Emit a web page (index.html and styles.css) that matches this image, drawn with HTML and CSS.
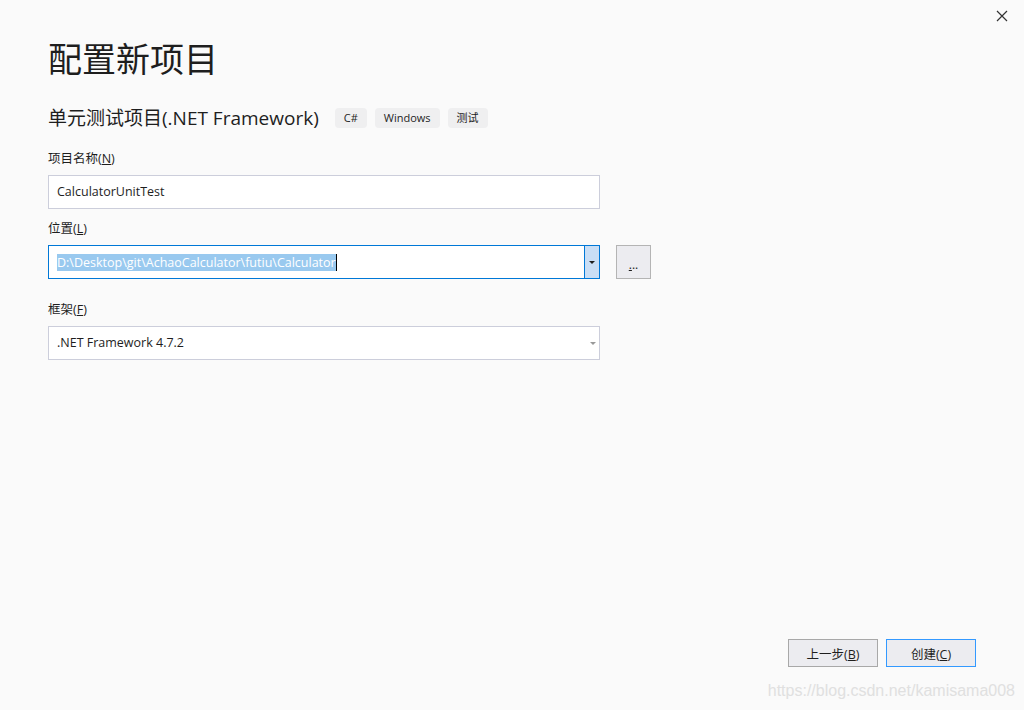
FILE: index.html
```html
<!DOCTYPE html>
<html lang="zh-CN">
<head>
  <meta charset="UTF-8">
  <meta name="viewport" content="width=device-width, initial-scale=1.0">
  <title>配置新项目</title>
  <link rel="stylesheet" href="styles.css">
</head>
<body>
  <div class="dialog">
    <div class="title-bar">
      <button class="close-button" title="关闭">
        <svg width="12" height="12" viewBox="0 0 12 12">
          <path d="M1 1 L11 11 M11 1 L1 11" stroke="#333" stroke-width="1.2" fill="none"/>
        </svg>
      </button>
    </div>

    <div class="content">
      <h1 class="page-title">配置新项目</h1>

      <div class="template-row">
        <h2 class="template-name">单元测试项目(.NET Framework)</h2>
        <span class="tag">C#</span>
        <span class="tag">Windows</span>
        <span class="tag">测试</span>
      </div>

      <div class="field name">
        <label class="field-label">项目名称(<u>N</u>)</label>
        <div class="text-box">CalculatorUnitTest</div>
      </div>

      <div class="field location">
        <label class="field-label">位置(<u>L</u>)</label>
        <div class="field-row">
          <div class="text-box combo focused">
            <span class="combo-text"><span class="selected">D:\Desktop\git\AchaoCalculator\futiu\Calculator</span><span class="caret"></span></span>
            <span class="combo-drop"><span class="arrow dark"></span></span>
          </div>
          <button class="browse-button"><u>.</u>..</button>
        </div>
      </div>

      <div class="field framework">
        <label class="field-label">框架(<u>F</u>)</label>
        <div class="text-box combo">
          <span class="combo-text">.NET Framework 4.7.2</span>
          <span class="combo-drop plain"><span class="arrow"></span></span>
        </div>
      </div>
    </div>

    <div class="footer">
      <button class="dialog-button">上一步(<u>B</u>)</button>
      <button class="dialog-button primary">创建(<u>C</u>)</button>
    </div>
    <div class="watermark">https://blog.csdn.net/kamisama008</div>
  </div>
</body>
</html>
```

FILE: styles.css
```css
body {
    margin: 0;
    background-color: #fafafa;
    font-family: "Open Sans", "Noto Sans CJK SC", sans-serif;
    color: #1e1e1e;
}

.dialog {
    width: 1024px;
    height: 710px;
    display: flex;
    flex-direction: column;
}

.title-bar {
    display: flex;
    justify-content: flex-end;
    height: 32px;
}

.close-button {
    width: 46px;
    height: 32px;
    border: none;
    background: transparent;
    display: flex;
    align-items: center;
    justify-content: center;
    padding: 0 0 0 2px;
}

.content {
    padding-left: 48px;
    flex: 1;
}

.page-title {
    font-family: "Noto Sans CJK SC", sans-serif;
    font-size: 34px;
    font-weight: normal;
    line-height: 46px;
    margin: 3px 0 0 0;
    color: #1e1e1e;
}

.template-row {
    display: flex;
    align-items: center;
    margin-top: 23px;
}

.template-name {
    font-size: 19px;
    font-weight: normal;
    line-height: 28px;
    margin: 0 16px 0 0;
}

.tag {
    background-color: #efeff0;
    border-radius: 4px;
    font-size: 11px;
    line-height: 20px;
    padding: 0 9px;
    margin-right: 8px;
}

.field-label {
    display: block;
    font-size: 12.5px;
    line-height: 18px;
    margin-bottom: 7px;
}

.field.name {
    margin-top: 18px;
}

.field.location {
    margin-top: 11px;
}

.field.framework {
    margin-top: 22px;
}

.field-row {
    display: flex;
    align-items: flex-start;
}

.text-box {
    box-sizing: border-box;
    width: 552px;
    height: 34px;
    border: 1px solid #cccedb;
    background-color: #fff;
    font-size: 12.5px;
    line-height: 32px;
    padding-left: 8px;
}

.combo {
    display: flex;
    padding-left: 0;
}

.combo-text {
    flex: 1;
    padding-left: 8px;
    display: flex;
    align-items: center;
}

.combo.focused {
    border-color: #0078d7;
}

.selected {
    background-color: #99c9ef;
    color: #fff;
    line-height: 17px;
}

.caret {
    width: 1px;
    height: 17px;
    background-color: #000;
}

.combo-drop {
    width: 14px;
    display: flex;
    align-items: center;
    justify-content: center;
    background-color: #c9def5;
    border-left: 1px solid #0078d7;
}

.combo-drop.plain {
    background-color: transparent;
    border-left: none;
    width: 13px;
}

.arrow {
    width: 0;
    height: 0;
    border-left: 3px solid transparent;
    border-right: 3px solid transparent;
    border-top: 3px solid #999;
}

.arrow.dark {
    border-top-color: #1e1e1e;
}

.browse-button {
    box-sizing: border-box;
    width: 35px;
    height: 34px;
    margin-left: 16px;
    border: 1px solid #b4b4b4;
    background-color: #ececf0;
    font-family: "Open Sans", sans-serif;
    font-size: 12px;
    padding: 4px 0 0 0;
    color: #1e1e1e;
}

.footer {
    display: flex;
    justify-content: flex-end;
    gap: 8px;
    padding-right: 48px;
}

.dialog-button {
    box-sizing: border-box;
    width: 90px;
    height: 28px;
    border: 1px solid #a8a8a8;
    background-color: #ececf0;
    font-family: "Open Sans", "Noto Sans CJK SC", sans-serif;
    font-size: 12.5px;
    color: #1e1e1e;
    padding: 0;
}

.dialog-button.primary {
    border-color: #3399ff;
}

.watermark {
    font-family: "Liberation Sans", Arial, sans-serif;
    font-size: 16px;
    color: #e0e0e0;
    text-align: right;
    padding: 14px 9px 10px 0;
    line-height: 19px;
}
```
